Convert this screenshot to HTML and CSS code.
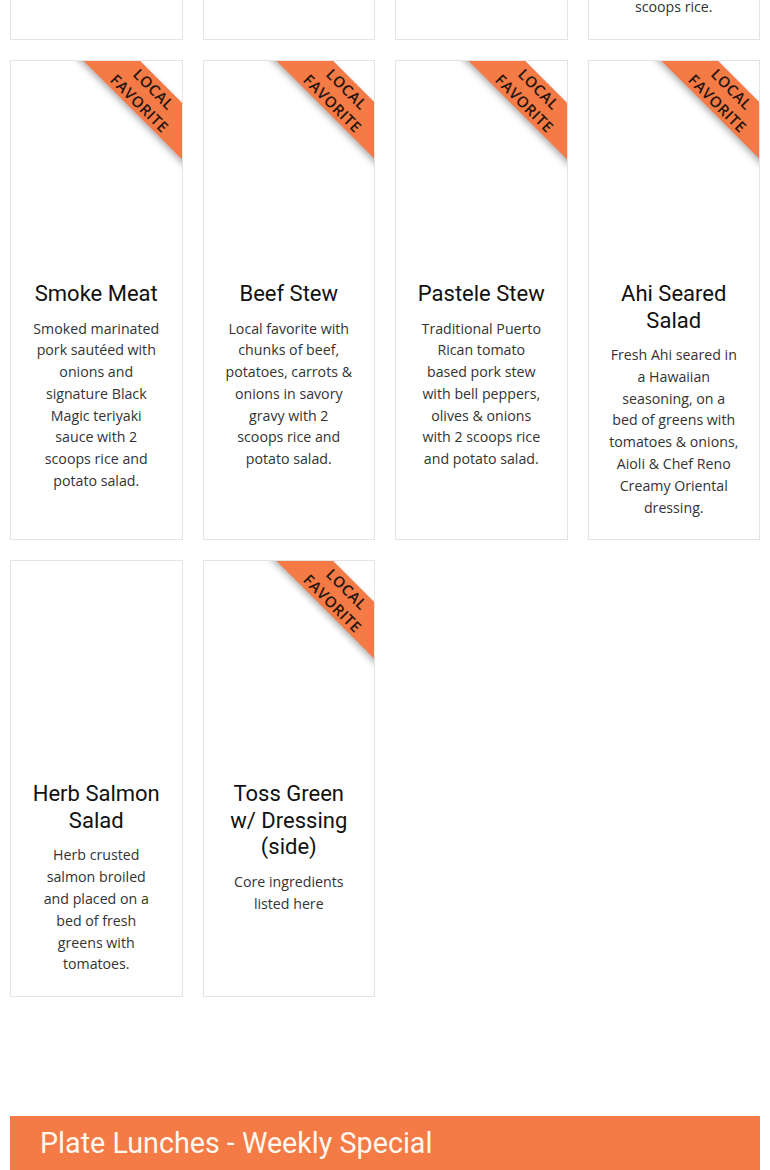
FILE: index.html
```
<!DOCTYPE html>
<html lang="en">
<head>
<meta charset="utf-8">
<title>Menu</title>
<link rel="stylesheet" href="styles.css">
</head>
<body>
<div class="page">
  <div class="grid">
    <div class="card card-cut"><div class="body"></div></div>
    <div class="card card-cut"><div class="body"></div></div>
    <div class="card card-cut"><div class="body"></div></div>
    <div class="card card-cut"><div class="body"><p class="desc">scoops rice.</p></div></div>

    <div class="card">
      <div class="ribbon">Local<br>Favorite</div>
      <div class="media"></div>
      <div class="body">
        <h3 class="title">Smoke Meat</h3>
        <p class="desc">Smoked marinated<br>pork sautéed with<br>onions and<br>signature Black<br>Magic teriyaki<br>sauce with 2<br>scoops rice and<br>potato salad.</p>
      </div>
    </div>
    <div class="card">
      <div class="ribbon">Local<br>Favorite</div>
      <div class="media"></div>
      <div class="body">
        <h3 class="title">Beef Stew</h3>
        <p class="desc">Local favorite with<br>chunks of beef,<br>potatoes, carrots &amp;<br>onions in savory<br>gravy with 2<br>scoops rice and<br>potato salad.</p>
      </div>
    </div>
    <div class="card">
      <div class="ribbon">Local<br>Favorite</div>
      <div class="media"></div>
      <div class="body">
        <h3 class="title">Pastele Stew</h3>
        <p class="desc">Traditional Puerto<br>Rican tomato<br>based pork stew<br>with bell peppers,<br>olives &amp; onions<br>with 2 scoops rice<br>and potato salad.</p>
      </div>
    </div>
    <div class="card">
      <div class="ribbon">Local<br>Favorite</div>
      <div class="media"></div>
      <div class="body">
        <h3 class="title">Ahi Seared<br>Salad</h3>
        <p class="desc">Fresh Ahi seared in<br>a Hawaiian<br>seasoning, on a<br>bed of greens with<br>tomatoes &amp; onions,<br>Aioli &amp; Chef Reno<br>Creamy Oriental<br>dressing.</p>
      </div>
    </div>

    <div class="card">
      <div class="media"></div>
      <div class="body">
        <h3 class="title">Herb Salmon<br>Salad</h3>
        <p class="desc">Herb crusted<br>salmon broiled<br>and placed on a<br>bed of fresh<br>greens with<br>tomatoes.</p>
      </div>
    </div>
    <div class="card">
      <div class="ribbon">Local<br>Favorite</div>
      <div class="media"></div>
      <div class="body">
        <h3 class="title">Toss Green<br>w/ Dressing<br>(side)</h3>
        <p class="desc">Core ingredients<br>listed here</p>
      </div>
    </div>
  </div>

  <div class="section-bar">
    <h2 class="section-title">Plate Lunches - Weekly Special</h2>
  </div>
</div>
</body>
</html>
```
FILE: styles.css
```
html, body {
  margin: 0;
  padding: 0;
  background: #ffffff;
}

.page {
  padding: 0 10px;
  font-family: "Open Sans", "Liberation Sans", sans-serif;
  color: #333333;
}

.grid {
  display: grid;
  grid-template-columns: repeat(4, 1fr);
  gap: 20px;
}

.card {
  position: relative;
  overflow: hidden;
  border: 1px solid #e4e4e4;
  background: #ffffff;
  text-align: center;
}

.card-cut {
  height: 39px;
  border-top: none;
  display: flex;
  flex-direction: column;
  justify-content: flex-end;
}

.media {
  height: 220px;
}

.body {
  padding: 0 12px 21px;
}

.title {
  margin: 0;
  font-family: Roboto, "Liberation Sans", sans-serif;
  font-weight: 400;
  font-size: 22px;
  line-height: 26.5px;
  color: #111111;
}

.desc {
  margin: 10px 0 0;
  font-size: 14.2px;
  line-height: 21.8px;
  color: #333333;
}

.card-cut .desc {
  margin: 0;
}

.ribbon {
  position: absolute;
  left: 56px;
  top: 15px;
  width: 160px;
  height: 40px;
  transform: rotate(45deg);
  background: #f47a46;
  box-shadow: -2px 3px 6px rgba(0, 0, 0, 0.3);
  color: #24150e;
  font-family: "Open Sans", "Liberation Sans", sans-serif;
  font-size: 15px;
  font-weight: 600;
  line-height: 20px;
  letter-spacing: 0.6px;
  text-transform: uppercase;
  display: flex;
  align-items: center;
  justify-content: center;
  text-align: center;
  z-index: 2;
}

.section-bar {
  margin-top: 119px;
  background: #f47a46;
  height: 70px;
  padding: 0 30px;
}

.section-title {
  margin: 0;
  padding-top: 10px;
  font-family: Roboto, "Liberation Sans", sans-serif;
  font-weight: 400;
  font-size: 28.7px;
  line-height: 34px;
  color: #fff8ef;
}
```
